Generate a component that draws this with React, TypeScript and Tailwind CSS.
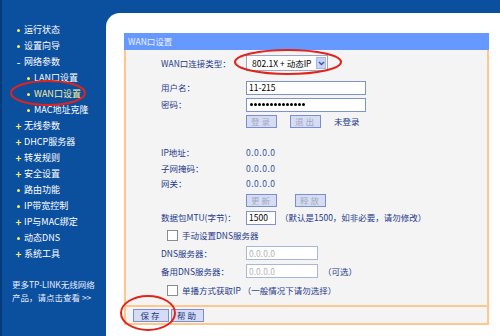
const menu = [
  { t: "运行状态", b: "dot" },
  { t: "设置向导", b: "dot" },
  { t: "网络参数", b: "minus" },
  { t: "LAN口设置", b: "dot", sub: true },
  { t: "WAN口设置", b: "dot", sub: true, active: true },
  { t: "MAC地址克隆", b: "dot", sub: true },
  { t: "无线参数", b: "plus" },
  { t: "DHCP服务器", b: "plus" },
  { t: "转发规则", b: "plus" },
  { t: "安全设置", b: "plus" },
  { t: "路由功能", b: "dot" },
  { t: "IP带宽控制", b: "dot" },
  { t: "IP与MAC绑定", b: "plus" },
  { t: "动态DNS", b: "dot" },
  { t: "系统工具", b: "plus" },
];

function Bullet({ kind }: { kind: string }) {
  if (kind === "plus") return <span className="w-[7px] text-center text-[10px] leading-none font-bold text-[#ffee55]">+</span>;
  if (kind === "minus") return <span className="w-[7px] text-center text-[10px] leading-none font-bold text-[#e8eeff]">-</span>;
  return (
    <span className="w-[7px] flex justify-center">
      <span className="w-[3px] h-[3px] rounded-full bg-[#ffee55]" />
    </span>
  );
}

function Btn({ label, disabled, w = "w-[31px]" }: { label: string; disabled?: boolean; w?: string }) {
  return (
    <div
      className={`${w} h-[13px] flex items-center justify-center bg-[#d5dcf3] border border-[#7a8fd2] text-[8.5px] tracking-[2px] ${
        disabled ? "text-[#a3a8bf]" : "text-[#1e3585]"
      }`}
    >
      {label}
    </div>
  );
}

function Row({ label, children, mt, h = "h-[15px]" }: { label: string; children?: React.ReactNode; mt: string; h?: string }) {
  return (
    <div className={`flex items-center ${h} ${mt}`}>
      <div className="w-[85px] text-[8.5px] text-[#1e3a8c] whitespace-nowrap">{label}</div>
      <div className="flex items-center">{children}</div>
    </div>
  );
}

function Check({ label, mt }: { label: string; mt: string }) {
  return (
    <div className={`flex items-center h-[15px] ${mt} pl-[6px]`}>
      <div className="w-[11px] h-[11px] bg-white border border-[#8c8c8c] mr-[4px]" />
      <span className="text-[8.5px] text-[#1e3a8c] whitespace-nowrap">{label}</span>
    </div>
  );
}

export default function App() {
  return (
    <div
      className="relative w-[500px] h-[336px] flex bg-[#0b4f9f] overflow-hidden"
      style={{ fontFamily: '"Noto Sans CJK SC", "Noto Sans", sans-serif' }}
    >
      {/* sidebar */}
      <aside className="w-[106px] shrink-0 border-l-2 border-[#063c7c] pt-[22px] pl-[13px]">
        {menu.map((m) => (
          <div key={m.t} className={`flex items-center h-[16px] gap-[2px] ${m.sub ? "pl-[10px]" : ""}`}>
            <Bullet kind={m.b} />
            <span className={`text-[9px] whitespace-nowrap ${m.active ? "text-[#f4eea0]" : "text-white"}`}>{m.t}</span>
          </div>
        ))}
        <div className="mt-[16px] -ml-[3px] text-[8.5px] leading-[13px] text-[#e8eeff] whitespace-nowrap">
          <div>更多TP-LINK无线网络</div>
          <div>产品，请点击查看 &gt;&gt;</div>
        </div>
      </aside>

      {/* main */}
      <div className="flex-1 flex flex-col pt-[13px]">
        <div className="flex-1 bg-white rounded-tl-[14px] pl-[18px] pt-[20px]">
          <div className="w-[365px]">
            <div className="h-[17px] bg-[#6699ff] flex items-center pl-[4px] text-[8.5px] text-[#eef2ff]">WAN口设置</div>
            <div className="border-x-2 border-b-2 border-[#ffc68e] bg-[#f4f4f4]">
              <div className="h-[255px] pl-[35px] flex flex-col">
                <Row label="WAN口连接类型：" mt="mt-[5px]" h="h-[16px]">
                  <div className="w-[82px] h-[16px] bg-white border border-[#9aa6c4] flex items-center justify-between pl-[5px] pr-[1px]">
                    <span className="text-[8.5px] text-black whitespace-nowrap">802.1X + 动态IP</span>
                    <div className="w-[10px] h-[12px] bg-[#c7d4f6] border border-[#a9b9e6] flex items-center justify-center">
                      <svg width="7" height="5" viewBox="0 0 7 5">
                        <path d="M1 1 L3.5 3.5 L6 1" fill="none" stroke="#3a4f9a" strokeWidth="1.3" />
                      </svg>
                    </div>
                  </div>
                </Row>
                <Row label="用户名：" mt="mt-[9px]">
                  <div className="w-[120px] h-[14px] bg-white border border-[#7f93c9] flex items-center pl-[2px] text-[8.5px] text-black">11-215</div>
                </Row>
                <Row label="密码：" mt="mt-[2px]">
                  <div className="w-[120px] h-[14px] bg-white border border-[#7f93c9] flex items-center pl-[3px] gap-[1px]">
                    {Array.from({ length: 14 }).map((_, i) => (
                      <span key={i} className="w-[3px] h-[3px] rounded-full bg-black" />
                    ))}
                  </div>
                </Row>
                <Row label="" mt="mt-[2px]" h="h-[14px]">
                  <Btn label="登录" disabled />
                  <div className="ml-[13px]">
                    <Btn label="退出" disabled />
                  </div>
                  <span className="ml-[13px] text-[8.5px] text-[#1e3a8c]">未登录</span>
                </Row>
                <Row label="IP地址：" mt="mt-[17px]">
                  <span className="text-[8.5px] text-[#3454a6] tracking-[0.5px]">0.0.0.0</span>
                </Row>
                <Row label="子网掩码：" mt="mt-[1px]">
                  <span className="text-[8.5px] text-[#3454a6] tracking-[0.5px]">0.0.0.0</span>
                </Row>
                <Row label="网关：" mt="mt-[0px]">
                  <span className="text-[8.5px] text-[#3454a6] tracking-[0.5px]">0.0.0.0</span>
                </Row>
                <Row label="" mt="mt-[2px]" h="h-[14px]">
                  <Btn label="更新" disabled />
                  <div className="ml-[18px]">
                    <Btn label="释放" disabled />
                  </div>
                </Row>
                <Row label="数据包MTU(字节)：" mt="mt-[3px]">
                  <div className="w-[30px] h-[14px] bg-white border border-[#7f93c9] flex items-center pl-[2px] text-[8.5px] text-black">1500</div>
                  <span className="ml-[4px] text-[8.5px] text-[#1e3a8c] whitespace-nowrap">（默认是1500，如非必要，请勿修改）</span>
                </Row>
                <Check label="手动设置DNS服务器" mt="mt-[3px]" />
                <Row label="DNS服务器：" mt="mt-[3px]" h="h-[14px]">
                  <div className="w-[72px] h-[14px] bg-white border border-[#a9b6d6] flex items-center pl-[2px] text-[8.5px] text-[#b5b5b5]">0.0.0.0</div>
                </Row>
                <Row label="备用DNS服务器：" mt="mt-[4px]" h="h-[14px]">
                  <div className="w-[72px] h-[14px] bg-white border border-[#a9b6d6] flex items-center pl-[2px] text-[8.5px] text-[#b5b5b5]">0.0.0.0</div>
                  <span className="ml-[5px] text-[8.5px] text-[#1e3a8c]">（可选）</span>
                </Row>
                <Check label="单播方式获取IP （一般情况下请勿选择）" mt="mt-[5px]" />
              </div>
              <div className="border-t-2 border-[#ffc68e] h-[18px] flex items-center pl-[7px] gap-[2px]">
                <Btn label="保存" w="w-[36px]" />
                <Btn label="帮助" w="w-[33px]" />
              </div>
            </div>
          </div>
        </div>
      </div>

      {/* red annotation circles */}
      <svg className="absolute inset-0 pointer-events-none" width="500" height="336" viewBox="0 0 500 336">
        <ellipse cx="48" cy="93" rx="37" ry="12" fill="none" stroke="#e2231a" strokeWidth="2" />
        <ellipse cx="288" cy="62" rx="53" ry="12" fill="none" stroke="#e2231a" strokeWidth="2" />
        <ellipse cx="148" cy="313" rx="27" ry="17" fill="none" stroke="#e2231a" strokeWidth="2" />
      </svg>
    </div>
  );
}
